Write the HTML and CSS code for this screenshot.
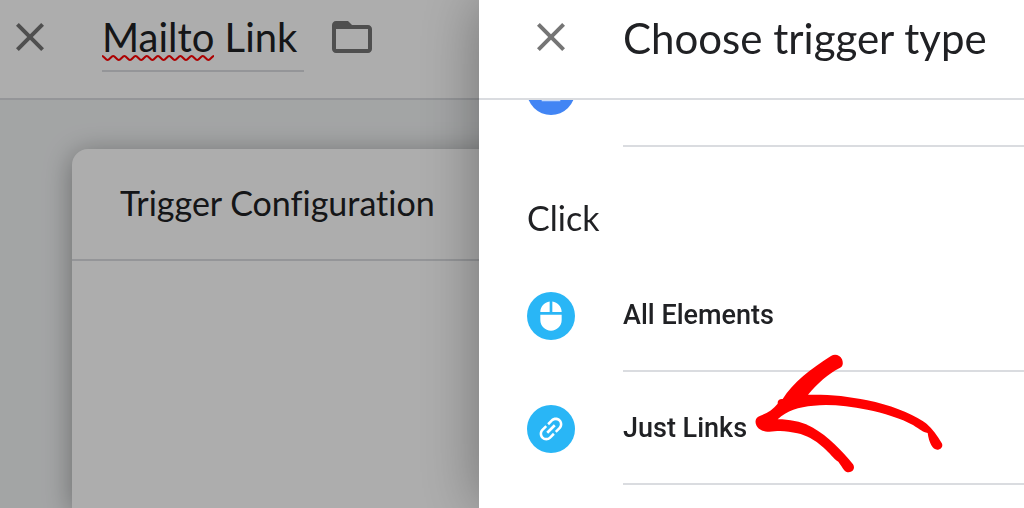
FILE: index.html
```html
<!DOCTYPE html>
<html lang="en">
<head>
<meta charset="utf-8">
<title>Choose trigger type</title>
<link rel="stylesheet" href="styles.css">
</head>
<body>
<div class="editor">
  <header class="bar editor-bar">
    <button class="icon-button" type="button" aria-label="Close editor">
      <svg class="icon" viewBox="0 0 24 24"><path d="M19 6.41L17.59 5 12 10.59 6.41 5 5 6.41 10.59 12 5 17.59 6.41 19 12 13.41 17.59 19 19 17.59 13.41 12z"/></svg>
    </button>
    <div class="name-field">
      <input class="name-input" type="text" value="Mailto Link" aria-label="Trigger name" spellcheck="false">
      <svg class="squiggle" viewBox="0 0 112 8"><path d="M0 2C2 2 3.600 6 5.600 6S9.200 2 11.200 2S14.800 6 16.800 6S20.400 2 22.400 2S26 6 28 6S31.600 2 33.600 2S37.200 6 39.200 6S42.800 2 44.800 2S48.400 6 50.400 6S54 2 56 2S59.600 6 61.600 6S65.200 2 67.200 2S70.800 6 72.800 6S76.400 2 78.400 2S82 6 84 6S87.600 2 89.600 2S93.200 6 95.200 6S98.800 2 100.800 2S104.400 6 106.400 6S110 2 112 2"/></svg>
    </div>
    <button class="icon-button" type="button" aria-label="Move to folder">
      <svg class="icon" viewBox="0 0 24 24"><path d="M20 6h-8l-2-2H4c-1.1 0-1.990.9-1.990 2L2 18c0 1.100.9 2 2 2h16c1.100 0 2-.9 2-2V8c0-1.100-.9-2-2-2zm0 12H4V8h16v10z"/></svg>
    </button>
  </header>
  <main class="canvas">
    <section class="card">
      <h2 class="card-title">Trigger Configuration</h2>
      <div class="card-body"></div>
    </section>
  </main>
</div>

<div class="scrim">
  <aside class="sheet" aria-labelledby="sheet-title">
    <header class="bar sheet-bar">
      <button class="icon-button" type="button" aria-label="Close">
        <svg class="icon" viewBox="0 0 24 24"><path d="M19 6.41L17.59 5 12 10.59 6.41 5 5 6.41 10.59 12 5 17.59 6.41 19 12 13.41 17.59 19 19 17.59 13.41 12z"/></svg>
      </button>
      <h1 class="sheet-title" id="sheet-title">Choose trigger type</h1>
    </header>
    <div class="viewport">
      <div class="scroller">
        <div class="row">
          <span class="badge badge-page"><svg class="glyph" viewBox="0 0 24 24"><path d="M5 18.500h14v1.200H5z" opacity="0.7"/></svg></span>
          <span class="row-body"></span>
        </div>
        <h2 class="group-title">Click</h2>
        <button class="row" type="button">
          <span class="badge"><svg class="glyph" viewBox="0 0 24 24"><path d="M13 1.070V9h7c0-4.080-3.050-7.440-7-7.930zM4 15c0 4.420 3.580 8 8 8s8-3.580 8-8v-4H4v4zm7-13.930C7.050 1.560 4 4.920 4 9h7V1.070z"/></svg></span>
          <span class="row-body">All Elements</span>
        </button>
        <button class="row" type="button">
          <span class="badge"><svg class="glyph" viewBox="0 0 24 24"><path transform="rotate(-45 12 12)" d="M3.900 12c0-1.710 1.390-3.100 3.100-3.100h4V7H7c-2.760 0-5 2.240-5 5s2.240 5 5 5h4v-1.900H7c-1.710 0-3.100-1.390-3.100-3.100zM8 13h8v-2H8v2zm9-6h-4v1.900h4c1.710 0 3.100 1.390 3.100 3.100s-1.390 3.100-3.100 3.100h-4V17h4c2.760 0 5-2.240 5-5s-2.240-5-5-5z"/></svg></span>
          <span class="row-body">Just Links
            <svg class="arrow" viewBox="0 0 660 450" aria-hidden="true"><path d="M273 48C285 41 300 45 306 58C311 71 308 80 299 84C266 100 231 132 204 164C270 163 323 168 382 181C447 194 511 219 548 243C572 258 588 282 605 309C611 319 602 329 592 329C578 329 567 308 563 279C547 276 541 269 519 255C484 235 430 219 382 209C323 198 270 192 221 197C175 201 141 211 113 238C153 238 188 246 219 263C263 288 308 333 339 373C346 383 340 397 326 397C314 397 310 386 295 365C280 356 269 338 251 323C222 298 199 286 172 280C150 275 126 271 104 274C82 278 62 274 52 261C42 247 46 231 61 227C82 219 100 208 113 191C112 181 119 176 128 177C158 129 214 85 273 48Z"/></svg>
          </span>
        </button>
      </div>
    </div>
  </aside>
</div>
</body>
</html>
```
FILE: styles.css
```css
* {
  box-sizing: border-box;
}

body {
  margin: 0;
  overflow: hidden;
  color: #202124;
  font-family: Lato, "Open Sans", sans-serif;
  font-variant-ligatures: none;
}

h1,
h2 {
  margin: 0;
  font-weight: 400;
}

button {
  padding: 0;
  border: 0;
  background: none;
  color: inherit;
  text-align: left;
}

svg {
  display: block;
}

.bar {
  display: flex;
  flex: none;
  align-items: flex-start;
  height: 100px;
  padding-top: 13px;
  border-bottom: 2px solid #dadce0;
  background: #fff;
}

.icon-button {
  flex: none;
  width: 48px;
  height: 48px;
}

.icon {
  width: 48px;
  height: 48px;
  fill: #757575;
}

.editor {
  display: flex;
  flex-direction: column;
  height: 100vh;
}

.editor-bar {
  padding-left: 6px;
}

.name-field {
  position: relative;
  width: 202px;
  margin: 0 24px 0 48px;
}

.name-input {
  display: block;
  width: 100%;
  height: 59px;
  padding: 0 0 10px;
  border: 0;
  border-bottom: 2px solid #dadce0;
  background: none;
  color: inherit;
  font: 400 40px/46px Lato, "Open Sans", sans-serif;
}

.squiggle {
  position: absolute;
  top: 41px;
  left: 0;
  width: 112px;
  height: 8px;
  fill: none;
  stroke: #f00;
  stroke-width: 2;
}

.canvas {
  flex: 1;
  padding: 49px 0 0 72px;
  background: #f1f3f4;
}

.card {
  display: flex;
  flex-direction: column;
  height: 100%;
  border-radius: 16px 0 0 0;
  background: #fff;
  box-shadow: 0 4px 28px rgba(0, 0, 0, 0.35);
}

.card-title {
  padding: 33px 48px 35px;
  border-bottom: 2px solid #dadce0;
  font-size: 34px;
  line-height: 42px;
}

.card-body {
  flex: 1;
}

.scrim {
  position: fixed;
  inset: 0;
  display: grid;
  grid-template-columns: 479fr 545fr;
  background: rgba(0, 0, 0, 0.32);
}

.sheet {
  display: flex;
  flex-direction: column;
  grid-column: 2;
  min-width: 0;
  min-height: 0;
  background: #fff;
  box-shadow: 0 0 56px rgba(0, 0, 0, 0.35);
}

.sheet-bar {
  gap: 48px;
  padding-left: 48px;
}

.sheet-title {
  font-size: 42px;
  line-height: 50px;
  white-space: nowrap;
}

.viewport {
  flex: 1;
  min-height: 0;
  overflow: hidden;
}

.scroller {
  margin-top: -66px;
}

.row {
  display: flex;
  align-items: center;
  gap: 48px;
  width: 100%;
  height: 113px;
  padding-left: 48px;
}

.badge {
  display: grid;
  flex: none;
  place-items: center;
  width: 48px;
  height: 48px;
  border-radius: 50%;
  background: #29b6f6;
}

.badge-page {
  background: #4285f4;
}

.glyph {
  width: 32px;
  height: 32px;
  fill: #fff;
}

.row-body {
  position: relative;
  display: flex;
  flex: 1;
  align-items: center;
  height: 100%;
  border-bottom: 2px solid #dadce0;
  font: 500 27px/32px Roboto, sans-serif;
}

.group-title {
  height: 112px;
  padding: 50px 48px 0;
  font-size: 34px;
  line-height: 42px;
}

.arrow {
  position: absolute;
  top: -32px;
  left: 117px;
  width: 220px;
  height: 150px;
  fill: #f00;
}
```
